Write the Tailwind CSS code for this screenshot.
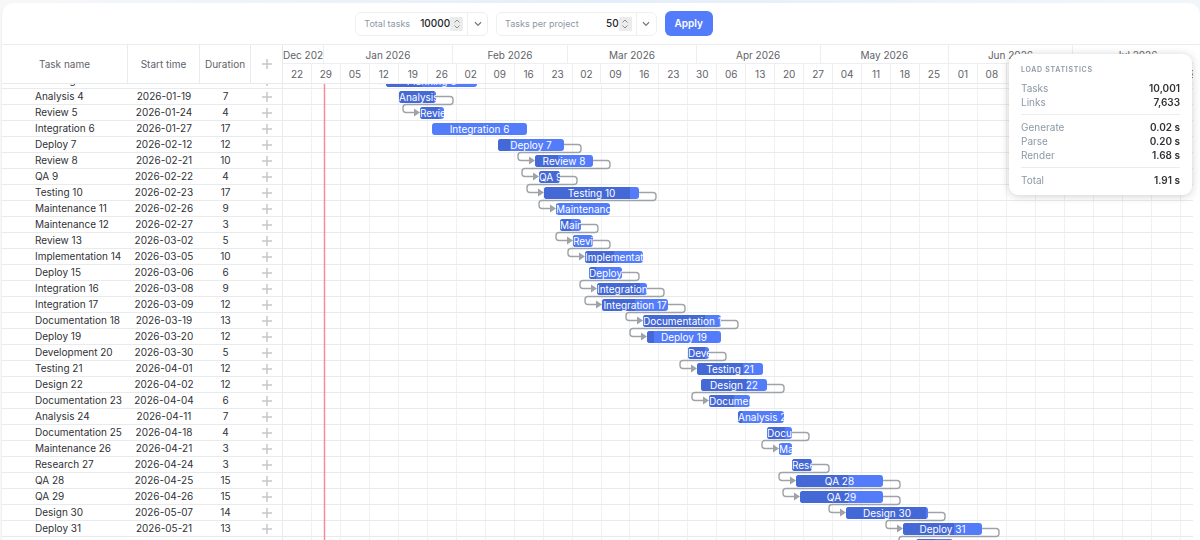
<!DOCTYPE html>
<html lang="en">
  <head>
    <meta charset="utf-8">
    <meta name="viewport" content="width=device-width, initial-scale=1">
    <title>Gantt performance demo</title>
    <script src="https://cdn.jsdelivr.net/npm/@tailwindcss/browser@4"></script>
  </head>
  <body class="h-screen overflow-hidden bg-linear-to-r from-[#f6f7f8] via-[#e4eefa] to-[#f1f6fb] font-['Inter',sans-serif] text-[#303236]">
    <main class="relative mt-[3px] ml-px flex h-full flex-col overflow-hidden rounded-t-xl border-l border-[#f0f0f0] bg-white">
      <form id="settings" class="flex h-[42px] shrink-0 items-center justify-center gap-2 border-b border-[#ececec] pr-[134px]">
        <div class="flex h-6 items-center rounded-md border border-[#eeeff0]">
          <label for="total" class="pl-2 text-[9px] text-[#8b98a5]">Total tasks</label>
          <input id="total" type="number" value="10000" class="w-10 text-right text-[10px] font-medium text-[#26282b] outline-none [appearance:textfield] [&::-webkit-inner-spin-button]:appearance-none">
          <span class="flex h-[14px] w-[13px] items-center justify-center bg-[#ececec]">
            <svg class="h-[10px] w-2" viewBox="0 0 8 10" fill="none" stroke="#8c8f93"><path d="M1.5 3.5 4 1l2.5 2.5M1.5 6.5 4 9l2.5-2.5"/></svg>
          </span>
          <button type="button" aria-label="Total tasks presets" class="ml-1 flex h-full w-5 items-center justify-center border-l border-[#eeeff0]">
            <svg class="h-[6px] w-2" viewBox="0 0 8 6" fill="none" stroke="#777b80" stroke-width="1.3"><path d="M1 1.2 4 4.4 7 1.2"/></svg>
          </button>
        </div>
        <div class="flex h-6 items-center rounded-md border border-[#eeeff0]">
          <label for="perProject" class="pl-2 text-[9px] text-[#8b98a5]">Tasks per project</label>
          <input id="perProject" type="number" value="50" class="w-10 text-right text-[10px] font-medium text-[#26282b] outline-none [appearance:textfield] [&::-webkit-inner-spin-button]:appearance-none">
          <span class="flex h-[14px] w-[13px] items-center justify-center bg-[#ececec]">
            <svg class="h-[10px] w-2" viewBox="0 0 8 10" fill="none" stroke="#8c8f93"><path d="M1.5 3.5 4 1l2.5 2.5M1.5 6.5 4 9l2.5-2.5"/></svg>
          </span>
          <button type="button" aria-label="Tasks per project presets" class="ml-1 flex h-full w-5 items-center justify-center border-l border-[#eeeff0]">
            <svg class="h-[6px] w-2" viewBox="0 0 8 6" fill="none" stroke="#777b80" stroke-width="1.3"><path d="M1 1.2 4 4.4 7 1.2"/></svg>
          </button>
        </div>
        <button type="submit" class="h-[25px] w-12 rounded-md bg-[#537cfa] text-[10px] font-semibold text-white">Apply</button>
      </form>

      <div id="gantt" class="flex min-h-0 flex-1 items-start overflow-y-auto [scrollbar-width:none]">
        <table class="w-[281px] shrink-0 table-fixed border-separate border-spacing-0 text-center text-[10px]">
          <thead class="sticky top-0 z-20 bg-white text-[#5f6368]">
            <tr class="h-[39px]">
              <th class="w-[126px] border-r border-b border-[#e9eaeb] font-normal">Task name</th>
              <th class="w-[72px] border-r border-b border-[#e9eaeb] font-normal">Start time</th>
              <th class="w-[51px] border-r border-b border-[#e9eaeb] font-normal">Duration</th>
              <th class="w-8 border-r border-b border-[#e9eaeb]">
                <button type="button" aria-label="Add task" class="block w-full">
                  <svg class="mx-auto h-[10px] w-[10px]" viewBox="0 0 10 10" stroke="#c3c6ca" stroke-width="1.5"><path d="M5 0v10M0 5h10"/></svg>
                </button>
              </th>
            </tr>
          </thead>
          <tbody id="rows"></tbody>
        </table>

        <div class="mr-[7px] min-w-0 flex-1">
          <div class="sticky top-0 z-20 overflow-hidden bg-white text-center text-[10px] text-[#5f6368]">
            <div id="months" class="flex h-[19px] border-b border-[#eeeeee] leading-5"></div>
            <div id="weeks" class="flex h-5 border-b border-[#e9eaeb] leading-5"></div>
          </div>
          <div id="chart" class="relative overflow-hidden"></div>
        </div>
      </div>

      <button type="button" aria-label="Toggle statistics" class="absolute top-[66px] right-[5px] flex h-4 w-4 items-center justify-center">
        <svg class="h-2 w-3" viewBox="0 0 12 8" stroke="#c0c3c7"><path d="M0 .5h12M0 4h12M0 7.5h12"/></svg>
      </button>

      <aside class="absolute top-[51px] right-2 z-30 w-[183px] rounded-[9px] bg-white px-3 pt-[10px] pb-2 text-[10px] shadow-[0_1px_8px_rgba(0,0,0,0.2)]">
        <h2 class="mb-[6px] text-[7px] leading-[11px] font-semibold tracking-widest text-[#8b98a5]">LOAD STATISTICS</h2>
        <dl class="leading-[14px] text-[#8b98a5]">
          <div class="flex justify-between"><dt>Tasks</dt><dd class="font-semibold text-[#303236]">10,001</dd></div>
          <div class="flex justify-between"><dt>Links</dt><dd class="font-semibold text-[#303236]">7,633</dd></div>
        </dl>
        <hr class="my-[5px] border-[#ececec]">
        <dl class="leading-[14px] text-[#8b98a5]">
          <div class="flex justify-between"><dt>Generate</dt><dd class="font-semibold text-[#303236]">0.02 s</dd></div>
          <div class="flex justify-between"><dt>Parse</dt><dd class="font-semibold text-[#303236]">0.20 s</dd></div>
          <div class="flex justify-between"><dt>Render</dt><dd class="font-semibold text-[#303236]">1.68 s</dd></div>
        </dl>
        <hr class="my-[5px] border-[#ececec]">
        <dl class="leading-[14px] text-[#8b98a5]">
          <div class="flex justify-between"><dt>Total</dt><dd class="font-semibold text-[#303236]">1.91 s</dd></div>
        </dl>
      </aside>
    </main>

    <script>
      // name, start date, working days, progress, linked to the next task
      const tasks = [
        ['Planning 3', '2026-01-16', 16, 0.4, false],
        ['Analysis 4', '2026-01-19', 7, 0.95, true],
        ['Review 5', '2026-01-24', 4, 0.8, false],
        ['Integration 6', '2026-01-27', 17, 0, false],
        ['Deploy 7', '2026-02-12', 12, 0.18, true],
        ['Review 8', '2026-02-21', 10, 0.4, true],
        ['QA 9', '2026-02-22', 4, 0.95, true],
        ['Testing 10', '2026-02-23', 17, 0.9, true],
        ['Maintenance 11', '2026-02-26', 9, 0.02, false],
        ['Maintenance 12', '2026-02-27', 3, 0.5, true],
        ['Review 13', '2026-03-02', 5, 0.1, true],
        ['Implementation 14', '2026-03-05', 10, 0.5, false],
        ['Deploy 15', '2026-03-06', 6, 0.2, true],
        ['Integration 16', '2026-03-08', 9, 0.86, true],
        ['Integration 17', '2026-03-09', 12, 0.5, true],
        ['Documentation 18', '2026-03-19', 13, 0.8, true],
        ['Deploy 19', '2026-03-20', 12, 0.1, false],
        ['Development 20', '2026-03-30', 5, 0.8, true],
        ['Testing 21', '2026-04-01', 12, 0.7, false],
        ['Design 22', '2026-04-02', 12, 0.7, true],
        ['Documentation 23', '2026-04-04', 6, 0.6, false],
        ['Analysis 24', '2026-04-11', 7, 0.08, false],
        ['Documentation 25', '2026-04-18', 4, 0.7, true],
        ['Maintenance 26', '2026-04-21', 3, 0.05, false],
        ['Research 27', '2026-04-24', 3, 0.95, true],
        ['QA 28', '2026-04-25', 15, 0.6, true],
        ['QA 29', '2026-04-26', 15, 0.58, true],
        ['Design 30', '2026-05-07', 14, 0.97, true],
        ['Deploy 31', '2026-05-21', 13, 0.65, true],
        ['Maintenance 32', '2026-05-24', 6, 0.5, false]
      ];

      const DAY = 86400000;
      const RANGE = 220;
      const ROW = 16;
      const origin = Date.UTC(2025, 11, 22);
      const gantt = document.getElementById('gantt');
      const chart = document.getElementById('chart');

      const dayOf = date => (Date.parse(date) - origin) / DAY;

      // Bars span calendar days while durations skip weekends
      function endDay(start, duration) {
        let day = start;
        while (duration > 0) {
          if (day % 7 < 5) duration--;
          day++;
        }
        return day;
      }

      function renderGrid() {
        document.getElementById('rows').innerHTML = tasks.map(([name, start, duration]) => `
          <tr class="h-4 leading-[15px]">
            <td class="border-b border-[#e9eaeb] pl-[33px] text-left whitespace-nowrap">${name}</td>
            <td class="border-b border-[#e9eaeb]">${start}</td>
            <td class="border-b border-[#e9eaeb]">${duration}</td>
            <td class="border-r border-b border-[#e9eaeb]">
              <button type="button" aria-label="Add subtask to ${name}" class="block w-full">
                <svg class="mx-auto h-[10px] w-[10px]" viewBox="0 0 10 10" stroke="#c3c6ca" stroke-width="1.5"><path d="M5 0v10M0 5h10"/></svg>
              </button>
            </td>
          </tr>`).join('');
      }

      function renderScales() {
        const months = [
          ['Dec 2025', 10], ['Jan 2026', 31], ['Feb 2026', 28], ['Mar 2026', 31],
          ['Apr 2026', 30], ['May 2026', 31], ['Jun 2026', 30], ['Jul 2026', 31]
        ];
        document.getElementById('months').innerHTML = months.map(([label, days]) =>
          `<div class="shrink-0 overflow-hidden border-r border-[#eeeeee] whitespace-nowrap" style="width:${days / RANGE * 100}%">${label}</div>`
        ).join('');

        let html = '';
        for (let day = 0; day < RANGE; day += 7) {
          const label = String(new Date(origin + day * DAY).getUTCDate()).padStart(2, '0');
          html += `<div class="shrink-0 border-r border-[#eeeeee]" style="width:${7 / RANGE * 100}%">${label}</div>`;
        }
        document.getElementById('weeks').innerHTML = html;
      }

      function renderChart() {
        const width = chart.clientWidth;
        const height = tasks.length * ROW;
        const x = day => Math.round(day / RANGE * width);
        let lines = '';
        let links = '';
        let bars = '';

        for (let day = 7; day < RANGE; day += 7) {
          lines += `<path d="M${x(day) - 0.5} 0V${height}" stroke="#f1f1f1"/>`;
        }

        tasks.forEach(([name, date, duration, progress, linked], i) => {
          const start = dayOf(date);
          const left = x(start);
          const right = x(endDay(start, duration));
          const top = i * ROW;
          lines += `<path d="M0 ${top + ROW - 0.5}H${width}" stroke="#e9eaeb"/>`;

          if (linked) {
            const to = x(dayOf(tasks[i + 1][1]));
            links += `<path d="M${right} ${top + 7.5}h14q3 0 3 3v2q0 3 -3 3H${to - 14}q-3 0 -3 3v2q0 3 3 3h10"/>`;
            links += arrow(to, top + ROW);
          }

          bars += `
            <div class="absolute h-3 overflow-hidden rounded-[3px] bg-[#537cfa] text-center text-[10px] leading-3 whitespace-nowrap text-white" style="left:${left}px;top:${top + 2}px;width:${right - left}px">
              <div class="absolute inset-y-0 left-0 bg-[#4468d6]" style="width:${progress * 100}%"></div>
              <span class="relative">${name}</span>
            </div>`;
        });

        // the first task is linked from one above the list
        links += arrow(x(dayOf(tasks[0][1])), 0);

        chart.style.height = height + 'px';
        chart.innerHTML = `
          <svg class="absolute inset-0 h-full w-full" fill="none">
            ${lines}
            <g stroke="#9fa2a6" stroke-width="1.4">${links}</g>
            <path d="M${x(10) + 0.5} 0V${height}" stroke="#f58a9b" stroke-width="1.5"/>
          </svg>
          ${bars}`;
      }

      function arrow(x, top) {
        return `<path d="M${x - 6} ${top + 3.5}v8l6 -4z" fill="#9fa2a6" stroke="none"/>`;
      }

      renderGrid();
      renderScales();
      new ResizeObserver(() => {
        renderChart();
        gantt.scrollTop = 11;
      }).observe(gantt);
      document.getElementById('settings').addEventListener('submit', event => event.preventDefault());
    </script>
  </body>
</html>
